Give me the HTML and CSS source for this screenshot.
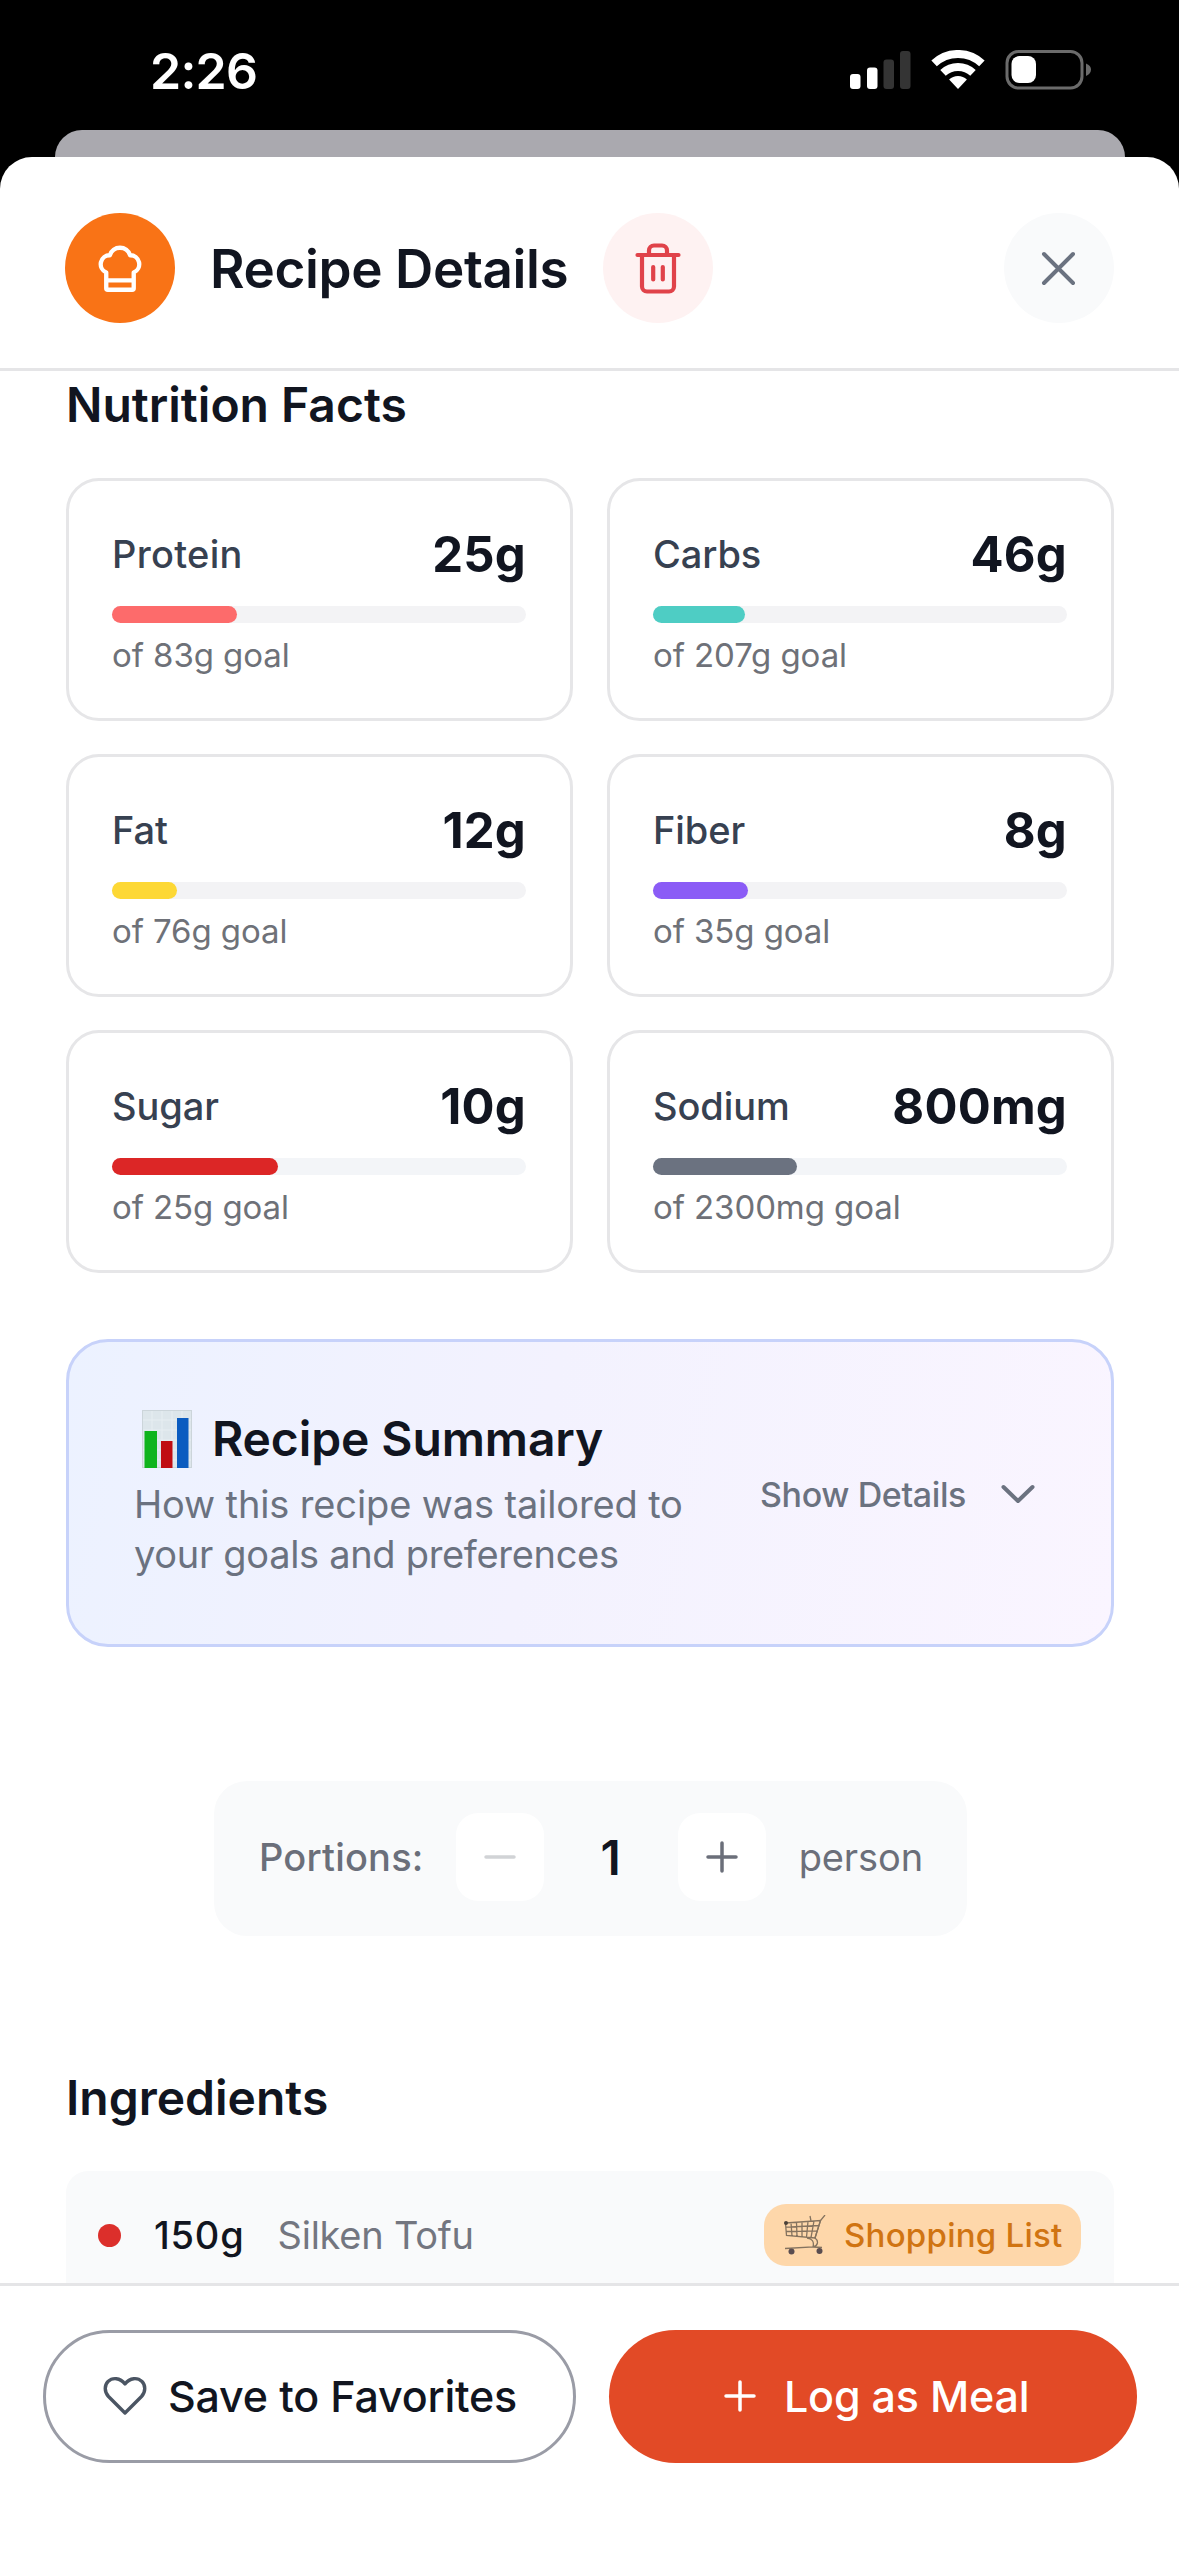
FILE: index.html
```html
<!DOCTYPE html>
<html lang="en">
<head>
<meta charset="utf-8">
<title>Recipe Details</title>
<link rel="stylesheet" href="styles.css">
</head>
<body>
<div class="screen">
  <div class="status">
    <span class="time">2:26</span>
    <svg class="status-icons" width="242" height="40" viewBox="0 0 242 40">
      <g fill="#fff"><rect x="0" y="24" width="10.5" height="15" rx="3"/><rect x="17" y="17.500" width="10.500" height="21.500" rx="3"/></g>
      <g fill="#343434"><rect x="33.500" y="9.500" width="10.500" height="29.500" rx="3"/><rect x="50" y="1" width="10.500" height="38" rx="3"/></g>
      <g fill="none" stroke="#fff" stroke-width="8"><path d="M84.100 13.400A35 35 0 0 1 131.900 13.400"/><path d="M93 22.900A22 22 0 0 1 123 22.900"/></g>
      <path fill="#fff" d="M108 39L99.100 29.500A13 13 0 0 1 116.900 29.500Z"/>
      <rect x="157" y="1.500" width="75" height="36.500" rx="11.500" fill="none" stroke="#6b6b6b" stroke-width="3"/>
      <rect x="161.500" y="6" width="24.500" height="27" rx="8" fill="#fff"/>
      <path fill="#6b6b6b" d="M236 13.500q5 2 5 6t-5 6.500z"/>
    </svg>
  </div>
  <div class="peek"></div>
  <div class="sheet">
    <header class="header">
      <svg class="round" viewBox="0 0 110 110">
        <circle cx="55" cy="55" r="55" fill="#f97316"/>
        <g transform="translate(27.500 28.700) scale(2.290)" fill="none" stroke="#fff" stroke-width="1.900" stroke-linejoin="round"><path d="M6 20.300V13.400A3.900 3.900 0 0 1 7.600 5.900A4.600 4.600 0 0 1 16.400 5.900A3.900 3.900 0 0 1 18 13.400V20.300Q18 21 17.300 21H6.700Q6 21 6 20.300ZM6 16.900H18"/></g>
      </svg>
      <h1 class="title">Recipe Details</h1>
      <svg class="round" viewBox="0 0 110 110">
        <circle cx="55" cy="55" r="55" fill="#fef2f2"/>
        <path fill="none" stroke="#e0434a" stroke-width="4.200" stroke-linecap="round" d="M34.500 42H75.500M46 42V37.500a5 5 0 0 1 5-5h8a5 5 0 0 1 5 5V42M39 42V73.500a5 5 0 0 0 5 5H66a5 5 0 0 0 5-5V42M50.200 54V66.500M59.800 54V66.500"/>
      </svg>
      <svg class="round close" viewBox="0 0 110 110">
        <circle cx="55" cy="55" r="55" fill="#f9fafb"/>
        <path fill="none" stroke="#6b7280" stroke-width="4" stroke-linecap="round" d="M40 41L69 70M69 41L40 70"/>
      </svg>
    </header>

    <main class="content">
      <h2 class="heading">Nutrition Facts</h2>
      <div class="grid">
        <div class="card"><div class="row"><span class="label wide">Protein</span><span class="value">25g</span></div><div class="bar"><div class="fill coral" style="width:30.100%"></div></div><div class="goal">of 83g goal</div></div>
        <div class="card"><div class="row"><span class="label">Carbs</span><span class="value">46g</span></div><div class="bar"><div class="fill teal" style="width:22.200%"></div></div><div class="goal">of 207g goal</div></div>
        <div class="card"><div class="row"><span class="label">Fat</span><span class="value">12g</span></div><div class="bar"><div class="fill yellow" style="width:15.800%"></div></div><div class="goal">of 76g goal</div></div>
        <div class="card"><div class="row"><span class="label">Fiber</span><span class="value">8g</span></div><div class="bar"><div class="fill violet" style="width:22.900%"></div></div><div class="goal">of 35g goal</div></div>
        <div class="card"><div class="row"><span class="label">Sugar</span><span class="value">10g</span></div><div class="bar cool"><div class="fill red" style="width:40%"></div></div><div class="goal">of 25g goal</div></div>
        <div class="card"><div class="row"><span class="label">Sodium</span><span class="value">800mg</span></div><div class="bar cool"><div class="fill gray" style="width:34.800%"></div></div><div class="goal">of 2300mg goal</div></div>
      </div>

      <section class="summary">
        <div class="summary-text">
          <div class="summary-title">
            <svg width="50" height="58" viewBox="0 0 50 58"><rect x=".5" y=".5" width="49" height="57" fill="#dde6eb" stroke="#ccd5da"/><path d="M1 10H49M1 20H49M1 30H49M1 40H49M1 50H49M10 1V57M20 1V57M30 1V57M40 1V57" stroke="#e7eef2" stroke-width="1"/><rect x="2.500" y="21" width="12.500" height="37" fill="#0fb41c"/><rect x="19" y="31" width="11.500" height="27" fill="#c00d12"/><rect x="35" y="8" width="11.500" height="50" fill="#0b5cc0"/></svg>
            <h2 class="heading2">Recipe Summary</h2>
          </div>
          <p class="desc">How this recipe was tailored to<br><span class="second">your goals and preferences</span></p>
        </div>
        <div class="toggle"><span>Show Details</span>
          <svg width="36" height="20" viewBox="0 0 36 20"><path d="M3.500 3L18 17L32.500 3" fill="none" stroke="#6b7280" stroke-width="4" stroke-linecap="round" stroke-linejoin="round"/></svg>
        </div>
      </section>

      <section class="portions">
        <span class="plabel">Portions:</span>
        <span class="step"><svg width="32" height="32" viewBox="0 0 32 32"><path d="M2 16H30" stroke="#d1d3d6" stroke-width="3.500" stroke-linecap="round"/></svg></span>
        <span class="count">1</span>
        <span class="step"><svg width="32" height="32" viewBox="0 0 32 32"><path d="M2 16H30M16 2V30" stroke="#6b6f7a" stroke-width="3.500" stroke-linecap="round"/></svg></span>
        <span class="person">person</span>
      </section>

      <h2 class="heading ingredients">Ingredients</h2>
      <div class="item">
        <span class="dot"></span>
        <span class="qty">150g</span>
        <span class="name">Silken Tofu</span>
        <span class="tag">
          <svg width="42" height="40" viewBox="0 0 42 40"><g fill="none" stroke="#85735f" stroke-width="1.300"><path d="M1.500 8L36.500 5.500L31 23L2.500 20.500ZM2 12.200L35 10.500M2 16.500L33.500 15.800M7 7.600L8 21M12.500 7.200L13 21.500M18 6.800V21.800M24 6.400L22.500 22.200M30 6L27 22.600"/><path d="M41 0L36.500 5.500L31 23C35 26 34 31 29 32M26 1L27 6M23 23Q31 24 29 32L1 33.500M38 32.500L29 32"/></g><circle cx="2" cy="8" r="2" fill="#4a4038"/><circle cx="7.500" cy="36.500" r="3" fill="#5a4d50"/><circle cx="35.500" cy="36" r="3" fill="#5a4d50"/></svg>
          <span>Shopping List</span>
        </span>
      </div>
    </main>

    <footer class="footer">
      <div class="btn save">
        <svg width="44" height="40" viewBox="0 0 44 40"><path d="M22 37L5.500 20.500C1 15.500 1.500 9 5 5.500C9.500 1.200 17 1.500 22 8C27 1.500 34.500 1.200 39 5.500C42.500 9 43 15.500 38.500 20.500Z" fill="none" stroke="#4b5563" stroke-width="3.400" stroke-linejoin="round"/></svg>
        <span>Save to Favorites</span>
      </div>
      <div class="btn log">
        <svg width="32" height="32" viewBox="0 0 32 32"><path d="M2 16H30M16 2V30" stroke="#fff" stroke-width="3.500" stroke-linecap="round"/></svg>
        <span>Log as Meal</span>
      </div>
    </footer>
  </div>
</div>
</body>
</html>
```
FILE: styles.css
```css
* { box-sizing: border-box; }
body { margin: 0; background: #000; font-family: Inter, "Liberation Sans", sans-serif; color: #111520; }
h1, h2, p { margin: 0; }
svg { display: block; flex: none; }

.screen { width: 1179px; height: 2556px; overflow: hidden; display: flex; flex-direction: column; }

/* status bar */
.status { height: 130px; padding: 11px 87px 0 150px; display: flex; justify-content: space-between; align-items: center; flex: none; }
.time { color: #fff; font-size: 50px; font-weight: 600; letter-spacing: -0.75px; }
.status-icons { margin-bottom: 1px; }
.peek { height: 27px; margin: 0 54px 0 55px; background: #aaa9af; border-radius: 27px 27px 0 0; flex: none; }

/* sheet */
.sheet { flex: 1; background: #fff; border-radius: 32px 32px 0 0; display: flex; flex-direction: column; min-height: 0; }
.header { height: 214px; flex: none; border-bottom: 3px solid #e5e5e7; padding: 56px 65px 0 65px; display: flex; gap: 33px; align-items: flex-start; }
.round { width: 110px; height: 110px; }
.close { margin-left: auto; }
.title { width: 362px; padding-left: 2px; font-size: 53px; letter-spacing: -0.38px; line-height: 112px; font-weight: 600; white-space: nowrap; }

.content { flex: none; height: 1912px; overflow: hidden; padding: 5px 65px 0 66px; }
.heading { font-size: 48px; line-height: 58px; font-weight: 600; margin-bottom: 44px; }

/* nutrition cards */
.grid { display: grid; grid-template-columns: 507px 507px; column-gap: 34px; row-gap: 33px; }
.card { height: 243px; border: 3px solid #e6e6e8; border-radius: 33px; padding: 44px 44px 0 43px; }
.row { display: flex; justify-content: space-between; align-items: center; height: 60px; }
.label { font-size: 38px; font-weight: 500; color: #374151; line-height: 58px; margin-bottom: 2px; letter-spacing: -0.1px; }
.wide { letter-spacing: 0.3px; }
.value { font-size: 49px; font-weight: 700; line-height: 60px; letter-spacing: 0.2px; }
.bar { height: 17px; margin-top: 21px; border-radius: 9px; background: #f3f3f5; }
.cool { background: #f3f5f8; }
.fill { height: 17px; border-radius: 9px; }
.coral { background: #fd6b6b; }
.teal { background: #4ecdc4; }
.yellow { background: #fdd835; }
.violet { background: #8b5cf6; }
.red { background: #dc2626; }
.gray { background: #6b7280; }
.goal { font-size: 33px; line-height: 40px; margin-top: 12px; color: #6e7178; letter-spacing: -0.08px; }

/* recipe summary */
.summary { height: 308px; margin-top: 66px; border: 3px solid #c7d2fa; border-radius: 42px; background: linear-gradient(100deg, #ecf2ff, #f3f2fe 45%, #faf5ff); display: flex; align-items: center; justify-content: space-between; padding: 0 75px 0 65px; }
.summary-title { display: flex; align-items: center; gap: 20px; height: 63px; padding-left: 8px; margin-bottom: 10px; }
.heading2 { font-size: 48px; line-height: 63px; font-weight: 600; letter-spacing: -0.11px; white-space: nowrap; }
.desc { font-size: 38px; line-height: 49.5px; color: #6b7280; letter-spacing: -0.13px; white-space: nowrap; }
.second { letter-spacing: -0.31px; }
.toggle { display: flex; align-items: center; gap: 34px; font-size: 34px; font-weight: 500; letter-spacing: -0.39px; color: #6b7280; margin-top: 2px; white-space: nowrap; }

/* portion stepper */
.portions { width: 753px; height: 155px; margin: 134px auto 0 148px; background: #f9fafb; border-radius: 33px; display: flex; align-items: center; padding: 0 44px 3px 45px; font-size: 38px; color: #6b6f7a; }
.plabel { width: 197px; font-weight: 500; letter-spacing: 0.2px; }
.step { width: 88px; height: 88px; border-radius: 22px; background: #fff; display: flex; align-items: center; justify-content: center; flex: none; }
.count { width: 134px; text-align: center; font-size: 48px; font-weight: 600; color: #111520; }
.person { margin-left: 33px; letter-spacing: -0.11px; }

/* ingredients */
.ingredients { margin-top: 133px; }
.item { height: 130px; background: #f9fafb; border-radius: 22px 22px 0 0; display: flex; align-items: center; padding: 0 33px 2px 32px; font-size: 38px; }
.dot { width: 23px; height: 23px; border-radius: 50%; background: #dc2f2b; margin-right: 33px; }
.qty { font-weight: 500; letter-spacing: 0.8px; margin-right: 33px; }
.name { color: #737680; letter-spacing: -0.25px; }
.tag { margin-left: auto; width: 317px; height: 62px; border-radius: 22px; background: #fed7aa; display: flex; align-items: center; gap: 18px; padding-left: 20px; font-size: 33px; font-weight: 500; letter-spacing: 0.25px; color: #d07412; white-space: nowrap; }

/* actions */
.footer { flex: 1; border-top: 3px solid #e5e5e7; padding: 44px 42px 0 43px; display: flex; gap: 33px; background: #fff; }
.btn { height: 133px; border-radius: 67px; display: flex; align-items: center; font-size: 43px; font-weight: 500; padding-bottom: 1px; white-space: nowrap; }
.save { width: 533px; border: 3px solid #9a9ca6; padding-left: 57px; gap: 21px; letter-spacing: -0.2px; }
.log { width: 528px; background: #e24a26; color: #fff; padding-left: 115px; gap: 28px; letter-spacing: -0.2px; }
```
